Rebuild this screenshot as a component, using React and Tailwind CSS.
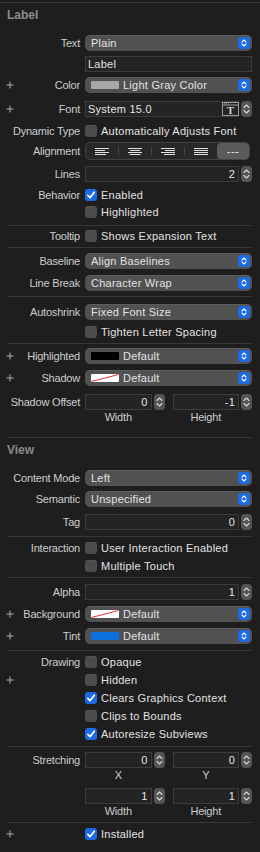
import React from "react";

const LBL = "text-[11px] tracking-[-0.2px] text-[#cdcdcd] leading-none whitespace-nowrap";
const CTL = "text-[11px] tracking-[0.25px] text-[#e3e3e3] leading-none whitespace-nowrap";

function Plus() {
  return (
    <svg width="8" height="8" viewBox="0 0 8 8">
      <path d="M4 0.5V7.5M0.5 4H7.5" stroke="#b0b0b0" strokeWidth="1" />
    </svg>
  );
}

function Row({ label, plus, mt, h, children }) {
  return (
    <div className={`flex items-center ${h || "h-[16px]"} ${mt || ""}`}>
      <div className="w-[80px] shrink-0 flex items-center justify-between pl-[6px]">
        <span className="flex items-center">{plus ? <Plus /> : null}</span>
        <span className={LBL}>{label}</span>
      </div>
      <div className="ml-[5px] w-[167px] h-full flex items-center">{children}</div>
    </div>
  );
}

function PopArrows() {
  return (
    <div className="w-[12px] h-[12px] rounded-[3px] bg-[#1b6ae6] flex items-center justify-center shrink-0">
      <svg width="12" height="12" viewBox="0 0 12 12">
        <path d="M4 5L6 3L8 5M4 7L6 9L8 7" stroke="#ffffff" strokeWidth="1.1" fill="none" strokeLinecap="round" strokeLinejoin="round" />
      </svg>
    </div>
  );
}

function Popup({ text, swatch }) {
  return (
    <div className="flex-1 h-[16px] rounded-[5px] bg-[#515151] shadow-[inset_0_1px_0_rgba(255,255,255,0.07)] flex items-center pl-[6px] pr-[2px]">
      <div className="flex-1 flex items-center gap-[4px]">
        {swatch}
        <span className={CTL}>{text}</span>
      </div>
      <PopArrows />
    </div>
  );
}

function Swatch({ kind }) {
  if (kind === "gray") return <div className="w-[28px] h-[8px] bg-[#a7a7a7] rounded-[1px]" />;
  if (kind === "black") return <div className="w-[28px] h-[8px] bg-[#000000] rounded-[1px]" />;
  if (kind === "blue") return <div className="w-[28px] h-[8px] bg-[#0b6fdc] rounded-[1px]" />;
  return (
    <svg width="28" height="8" viewBox="0 0 28 8" className="rounded-[1px]">
      <rect x="0" y="0" width="28" height="8" fill="#ffffff" />
      <path d="M0.5 7.5L27.5 0.5" stroke="#e03030" strokeWidth="1" />
    </svg>
  );
}

function Stepper() {
  return (
    <div className="w-[11px] h-[16px] rounded-[4px] bg-[#545454] flex items-center justify-center shrink-0">
      <svg width="11" height="16" viewBox="0 0 11 16">
        <path d="M3 6.5L5.5 4L8 6.5M3 9.5L5.5 12L8 9.5" stroke="#d8d8d8" strokeWidth="1.1" fill="none" strokeLinecap="round" strokeLinejoin="round" />
      </svg>
    </div>
  );
}

function Field({ value, children, left }) {
  return (
    <div
      className={
        left
          ? "flex-1 h-[16px] bg-[#242424] border border-[#3c3c3c] flex items-center pl-[2px]"
          : "flex-1 h-[16px] bg-[#242424] border border-[#3c3c3c] flex items-center justify-end pr-[3px]"
      }
    >
      {value !== undefined ? <span className={CTL}>{value}</span> : null}
      {children}
    </div>
  );
}

function NumField({ value }) {
  return (
    <div className="flex-1 flex items-center gap-[2px] h-full">
      <Field value={value} />
      <Stepper />
    </div>
  );
}

function Check({ checked, label }) {
  return (
    <div className="flex items-center gap-[4px]">
      {checked ? (
        <div className="w-[12px] h-[12px] rounded-[3px] bg-[#1c6ae6] flex items-center justify-center">
          <svg width="12" height="12" viewBox="0 0 12 12">
            <path d="M2.8 6.3L5 8.7L9.3 3.2" stroke="#ffffff" strokeWidth="1.7" fill="none" strokeLinecap="round" strokeLinejoin="round" />
          </svg>
        </div>
      ) : (
        <div className="w-[12px] h-[12px] rounded-[3px] bg-[#4c4c4c] shadow-[inset_0_1px_0_rgba(255,255,255,0.06)]" />
      )}
      <span className={CTL}>{label}</span>
    </div>
  );
}

function Sep({ mt }) {
  return <div className={`h-px bg-[#383838] mx-[8px] ${mt}`} />;
}

function Header({ text }) {
  return (
    <div className="h-[24px] flex items-center pl-[7px] text-[12px] font-bold text-[#8c8c8c] leading-none">
      {text}
    </div>
  );
}

function SubLabels({ a, b, mt }) {
  return (
    <div className={`flex h-[14px] items-center ${mt || ""}`}>
      <div className="w-[85px] shrink-0" />
      <div className="w-[167px] grid grid-cols-2 gap-[8px]">
        <div className="flex gap-[2px]">
          <span className={`flex-1 text-center ${LBL}`}>{a}</span>
          <span className="w-[11px]" />
        </div>
        <div className="flex gap-[2px]">
          <span className={`flex-1 text-center ${LBL}`}>{b}</span>
          <span className="w-[11px]" />
        </div>
      </div>
    </div>
  );
}

function PairFields({ a, b }) {
  return (
    <div className="w-full h-full grid grid-cols-2 gap-[8px]">
      <NumField value={a} />
      <NumField value={b} />
    </div>
  );
}

function AlignIcon({ type }) {
  const rows = {
    left: [
      [0, 14],
      [0, 10],
      [0, 14],
      [0, 11],
    ],
    center: [
      [0, 14],
      [2, 10],
      [0, 14],
      [1.5, 11],
    ],
    right: [
      [0, 14],
      [4, 10],
      [0, 14],
      [3, 11],
    ],
    justify: [
      [0, 14],
      [0, 14],
      [0, 14],
      [0, 14],
    ],
  }[type];
  return (
    <svg width="14" height="7" viewBox="0 0 14 7">
      {rows.map((r, i) => (
        <rect key={i} x={r[0]} y={i * 2} width={r[1]} height="1" fill="#e2e2e2" />
      ))}
    </svg>
  );
}

function Segmented() {
  const Div = () => <div className="w-px h-[8px] bg-[#474747]" />;
  return (
    <div className="w-[165px] h-[18px] rounded-[5px] bg-[#282828] border border-[#434343] flex items-center">
      <div className="flex-1 h-full flex items-center justify-center">
        <AlignIcon type="left" />
      </div>
      <Div />
      <div className="flex-1 h-full flex items-center justify-center">
        <AlignIcon type="center" />
      </div>
      <Div />
      <div className="flex-1 h-full flex items-center justify-center">
        <AlignIcon type="right" />
      </div>
      <Div />
      <div className="flex-1 h-full flex items-center justify-center">
        <AlignIcon type="justify" />
      </div>
      <div className="flex-1 h-[16px] rounded-[4px] bg-[#5b5b5b] flex items-center justify-center">
        <span className="text-[11px] text-[#ececec] leading-none tracking-[0.5px]">---</span>
      </div>
    </div>
  );
}

function FontIcon() {
  return (
    <svg width="17" height="14" viewBox="0 0 17 14" className="shrink-0">
      <rect x="0.5" y="0.5" width="16" height="13" fill="none" stroke="#9c9c9c" strokeWidth="1" />
      <path d="M0.5 3H16.5" stroke="#9c9c9c" strokeWidth="1" />
      <rect x="2" y="1.3" width="1" height="1" fill="#9c9c9c" />
      <rect x="4" y="1.3" width="1" height="1" fill="#9c9c9c" />
      <rect x="6" y="1.3" width="1" height="1" fill="#9c9c9c" />
      <text x="8.5" y="12.3" textAnchor="middle" fontFamily="Liberation Serif, serif" fontWeight="bold" fontSize="11" fill="#d0d0d0">
        T
      </text>
    </svg>
  );
}

export default function App() {
  return (
    <div className="w-[260px] min-h-[852px] bg-[#1e1e1e] font-['Liberation_Sans',Arial,sans-serif] overflow-hidden">
      <div className="h-[2px]" />
      <div className="h-px bg-[#353535]" />
      <Header text="Label" />

      <Row label="Text" mt="mt-[8px]">
        <Popup text="Plain" />
      </Row>
      <Row label="" mt="mt-[5px]">
        <Field left value="Label" />
      </Row>
      <Row label="Color" plus mt="mt-[5px]">
        <Popup text="Light Gray Color" swatch={<Swatch kind="gray" />} />
      </Row>
      <Row label="Font" plus mt="mt-[8px]">
        <div className="flex-1 flex items-center gap-[2px] h-full">
          <div className="flex-1 h-[16px] bg-[#242424] border border-[#3c3c3c] border-r-0 flex items-center pl-[2px]">
            <span className={`flex-1 ${CTL}`}>System 15.0</span>
            <FontIcon />
          </div>
          <Stepper />
        </div>
      </Row>
      <Row label="Dynamic Type" mt="mt-[6px]">
        <Check label="Automatically Adjusts Font" />
      </Row>
      <Row label="Alignment" mt="mt-[3px]" h="h-[18px]">
        <Segmented />
      </Row>
      <Row label="Lines" mt="mt-[6px]">
        <NumField value="2" />
      </Row>
      <Row label="Behavior" mt="mt-[5px]">
        <Check checked label="Enabled" />
      </Row>
      <Row label="" mt="mt-[1px]">
        <Check label="Highlighted" />
      </Row>
      <Sep mt="mt-[5px]" />
      <Row label="Tooltip" mt="mt-[2px]">
        <Check label="Shows Expansion Text" />
      </Row>
      <Sep mt="mt-[3px]" />
      <Row label="Baseline" mt="mt-[5px]">
        <Popup text="Align Baselines" />
      </Row>
      <Row label="Line Break" mt="mt-[6px]">
        <Popup text="Character Wrap" />
      </Row>
      <Sep mt="mt-[5px]" />
      <Row label="Autoshrink" mt="mt-[7px]">
        <Popup text="Fixed Font Size" />
      </Row>
      <Row label="" mt="mt-[4px]">
        <Check label="Tighten Letter Spacing" />
      </Row>
      <Sep mt="mt-[3px]" />
      <Row label="Highlighted" plus mt="mt-[4px]">
        <Popup text="Default" swatch={<Swatch kind="black" />} />
      </Row>
      <Row label="Shadow" plus mt="mt-[6px]">
        <Popup text="Default" swatch={<Swatch kind="none" />} />
      </Row>
      <Row label="Shadow Offset" mt="mt-[8px]">
        <PairFields a="0" b="-1" />
      </Row>
      <SubLabels a="Width" b="Height" />
      <Sep mt="mt-[13px]" />
      <Header text="View" />

      <Row label="Content Mode" mt="mt-[8px]">
        <Popup text="Left" />
      </Row>
      <Row label="Semantic" mt="mt-[5px]">
        <Popup text="Unspecified" />
      </Row>
      <Row label="Tag" mt="mt-[7px]">
        <NumField value="0" />
      </Row>
      <Sep mt="mt-[6px]" />
      <Row label="Interaction" mt="mt-[3px]">
        <Check label="User Interaction Enabled" />
      </Row>
      <Row label="" mt="mt-[2px]">
        <Check label="Multiple Touch" />
      </Row>
      <Sep mt="mt-[3px]" />
      <Row label="Alpha" mt="mt-[6px]">
        <NumField value="1" />
      </Row>
      <Row label="Background" plus mt="mt-[6px]">
        <Popup text="Default" swatch={<Swatch kind="none" />} />
      </Row>
      <Row label="Tint" plus mt="mt-[6px]">
        <Popup text="Default" swatch={<Swatch kind="blue" />} />
      </Row>
      <Sep mt="mt-[6px]" />
      <Row label="Drawing" mt="mt-[3px]">
        <Check label="Opaque" />
      </Row>
      <Row label="" plus mt="mt-[2px]">
        <Check label="Hidden" />
      </Row>
      <Row label="" mt="mt-[2px]">
        <Check checked label="Clears Graphics Context" />
      </Row>
      <Row label="" mt="mt-[2px]">
        <Check label="Clips to Bounds" />
      </Row>
      <Row label="" mt="mt-[2px]">
        <Check checked label="Autoresize Subviews" />
      </Row>
      <Sep mt="mt-[4px]" />
      <Row label="Stretching" mt="mt-[5px]">
        <PairFields a="0" b="0" />
      </Row>
      <SubLabels a="X" b="Y" />
      <Row label="" mt="mt-[6px]">
        <PairFields a="1" b="1" />
      </Row>
      <SubLabels a="Width" b="Height" />
      <Sep mt="mt-[4px]" />
      <Row label="" plus mt="mt-[3px]">
        <Check checked label="Installed" />
      </Row>
    </div>
  );
}
